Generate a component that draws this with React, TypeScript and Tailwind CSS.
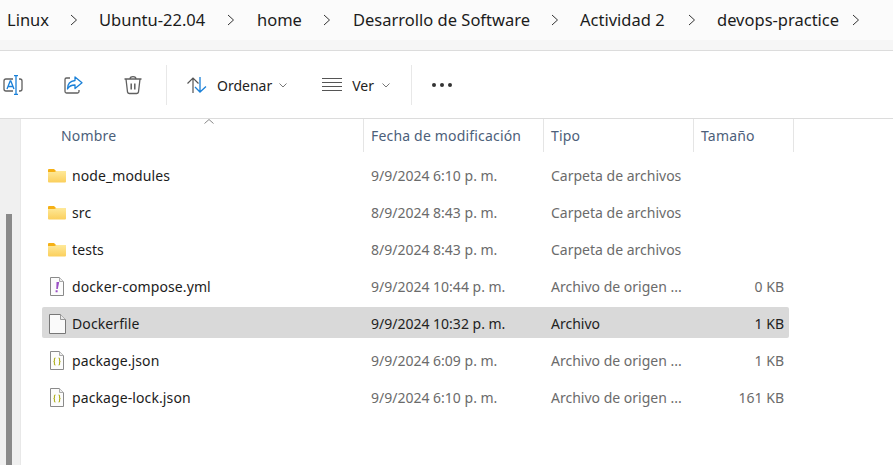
const font = { fontFamily: '"Noto Sans", "Open Sans", sans-serif' };

function Sep() {
  return (
    <svg width="8" height="12" viewBox="0 0 8 12" className="shrink-0 text-[#333]">
      <path d="M1 1l5.500 5L1 11" fill="none" stroke="currentColor" strokeWidth="1" />
    </svg>
  );
}

function Crumbs() {
  const items = [
    ["Linux", "w-[41px]", "w-[51px]"],
    ["Ubuntu-22.04", "w-[106px]", "w-[52px]"],
    ["home", "w-[44px]", "w-[52px]"],
    ["Desarrollo de Software", "w-[176px]", "w-[51px]"],
    ["Actividad 2", "w-[86px]", "w-[51px]"],
    ["devops-practice", "w-[124px]", "w-[30px]"],
  ];
  return (
    <div className="h-10 bg-[#fbfbfb] flex items-center pl-[7px]">
      {items.map(([t, w, g]) => (
        <div key={t} className="flex items-center">
          <span className={`${w} text-[16.5px] tracking-[0px] text-[#1c1c1c] whitespace-nowrap`}>{t}</span>
          <div className={`${g} flex justify-center`}><Sep /></div>
        </div>
      ))}
    </div>
  );
}

function Rename() {
  return (
    <svg width="22" height="22" viewBox="0 0 22 22" fill="none">
      <path d="M12 5H5a2 2 0 0 0-2 2v8a2 2 0 0 0 2 2h7M18 5h1a2 2 0 0 1 2 2v8a2 2 0 0 1-2 2h-1" stroke="#606060" strokeWidth="1.3" />
      <path d="M6 15l3.200-8h.6L13 15M7.200 12.500h4.600" stroke="#1a80d8" strokeWidth="1.3" />
      <path d="M15 2v18M13 1.600h4M13 20.400h4" stroke="#1a80d8" strokeWidth="1.3" />
    </svg>
  );
}

function Share() {
  return (
    <svg width="20" height="20" viewBox="0 0 20 20" fill="none">
      <path d="M7 3H3.500A1.500 1.500 0 0 0 2 4.500v12A1.500 1.500 0 0 0 3.500 18h11a1.500 1.500 0 0 0 1.500-1.500V15" stroke="#606060" strokeWidth="1.3" />
      <path d="M12 2l7 5.800-7 5.700V10c-3.500 0-6 1-7.500 4 0-5 2.500-8 7.500-8.500V2z" stroke="#1a80d8" strokeWidth="1.3" strokeLinejoin="round" />
    </svg>
  );
}

function Trash() {
  return (
    <svg width="20" height="20" viewBox="0 0 20 20" fill="none" stroke="#606060" strokeWidth="1.3">
      <path d="M1.500 4h17M7 4c0-3.300 6-3.300 6 0" />
      <path d="M3 4l1.500 13a2 2 0 0 0 2 1.500h7a2 2 0 0 0 2-1.500L17 4" />
      <path d="M8.200 8.500v6M11.800 8.500v6" strokeWidth="1.5" />
    </svg>
  );
}

function SortIcon() {
  return (
    <svg width="22" height="18" viewBox="0 0 22 18" fill="none">
      <path d="M7 17V2M1.500 7.500L7 2l5.500 5.500" stroke="#555" strokeWidth="1.2" />
      <path d="M14 1v15M9 11l5 5 6-5.500" stroke="#1a80d8" strokeWidth="1.3" />
    </svg>
  );
}

function ViewIcon() {
  return (
    <svg width="20" height="14" viewBox="0 0 20 14" stroke="#555" strokeWidth="1">
      <path d="M0 .5h20M0 4.500h20M0 8.500h20M0 12.500h20" />
    </svg>
  );
}

function Chevron() {
  return (
    <svg width="8" height="5" viewBox="0 0 8 5" className="text-[#777]">
      <path d="M.5.500L4 4 7.500.500" fill="none" stroke="currentColor" strokeWidth="1" />
    </svg>
  );
}

function Toolbar() {
  return (
    <div className="h-[68px] bg-white border-t border-[#dcdcdc] flex items-center">
      <div className="w-[166px] h-full flex items-center pl-px">
        <Rename />
        <div className="ml-[40px]"><Share /></div>
        <div className="ml-[40px]"><Trash /></div>
      </div>
      <div className="w-px h-10 bg-[#e8e8e8]" />
      <div className="w-[244px] flex items-center pl-[19px] text-[14px] text-[#222] pt-px">
        <SortIcon />
        <span className="ml-[9px] mr-[7px]">Ordenar</span>
        <Chevron />
        <div className="ml-[35px]"><ViewIcon /></div>
        <span className="ml-2.5 mr-2">Ver</span>
        <Chevron />
      </div>
      <div className="w-px h-10 bg-[#e8e8e8]" />
      <div className="ml-5 flex gap-[4px]">
        <span className="size-[4px] rounded-full bg-[#333]" />
        <span className="size-[4px] rounded-full bg-[#333]" />
        <span className="size-[4px] rounded-full bg-[#333]" />
      </div>
    </div>
  );
}

function Folder() {
  return (
    <svg width="18" height="16" viewBox="0 0 18 16">
      <defs>
        <linearGradient id="fg" x1="0" y1="0" x2="0" y2="1">
          <stop offset="0" stopColor="#fee99a" />
          <stop offset="1" stopColor="#fbcf5c" />
        </linearGradient>
      </defs>
      <path d="M0 2a1 1 0 0 1 1-1h5l2 2h9a1 1 0 0 1 1 1v2H0z" fill="#f5b015" />
      <path d="M0 4h6.500l2-1H18v10.500a1 1 0 0 1-1 1H1a1 1 0 0 1-1-1z" fill="url(#fg)" />
    </svg>
  );
}

function Doc({ kind }: { kind: "warn" | "plain" | "json" }) {
  if (kind === "plain") {
    return (
      <svg width="17" height="20" viewBox="0 0 17 20">
        <path d="M.5.500h11l5 5v14H.5z" fill="#fafafa" stroke="#777" />
        <path d="M11.500.500v5h5" fill="#e8e8e8" stroke="#999" />
      </svg>
    );
  }
  return (
    <svg width="14" height="19" viewBox="0 0 14 19">
      <path d="M.5.500h9l4 4v14H.5z" fill="#fcfcfc" stroke="#8a8a8a" />
      <path d="M9.500.500v4h4" fill="#eee" stroke="#aaa" />
      {kind === "warn" ? (
        <path d="M6.500 5h2.700L7.800 12H6.300zM5.600 13.200h2V15.200h-2z" fill="#9a4fc4" />
      ) : (
        <path d="M5.500 7C4 7 4.500 8.500 4.500 9.500S3.500 10.500 3.500 10.500s1 .2 1 1S4 14 5.500 14M8.500 7c1.500 0 1 1.500 1 2.500s1 1 1 1-1 .2-1 1 .5 2.500-1 2.500" fill="none" stroke="#b0b020" strokeWidth="1.1" />
      )}
    </svg>
  );
}

const rows: { name: string; date: string; type: string; size: string; icon: "folder" | "warn" | "plain" | "json"; sel?: boolean }[] = [
  { name: "node_modules", date: "9/9/2024 6:10 p. m.", type: "Carpeta de archivos", size: "", icon: "folder" },
  { name: "src", date: "8/9/2024 8:43 p. m.", type: "Carpeta de archivos", size: "", icon: "folder" },
  { name: "tests", date: "8/9/2024 8:43 p. m.", type: "Carpeta de archivos", size: "", icon: "folder" },
  { name: "docker-compose.yml", date: "9/9/2024 10:44 p. m.", type: "Archivo de origen ...", size: "0 KB", icon: "warn" },
  { name: "Dockerfile", date: "9/9/2024 10:32 p. m.", type: "Archivo", size: "1 KB", icon: "plain", sel: true },
  { name: "package.json", date: "9/9/2024 6:09 p. m.", type: "Archivo de origen ...", size: "1 KB", icon: "json" },
  { name: "package-lock.json", date: "9/9/2024 6:10 p. m.", type: "Archivo de origen ...", size: "161 KB", icon: "json" },
];

function Row({ r }: { r: (typeof rows)[number] }) {
  const muted = r.sel ? "text-[#222]" : "text-[#6b6b6b]";
  return (
    <div className={`ml-[21px] w-[747px] h-[31px] pt-[2px] rounded-[2px] flex items-center text-[14px] ${r.sel ? "bg-[#d9d9d9]" : ""}`}>
      <div className="w-[30px] flex justify-center shrink-0">
        {r.icon === "folder" ? <Folder /> : <Doc kind={r.icon} />}
      </div>
      <div className="w-[299px] text-[#1c1c1c] tracking-[0.1px] whitespace-nowrap">{r.name}</div>
      <div className={`w-[180px] whitespace-nowrap ${muted}`}>{r.date}</div>
      <div className={`w-[150px] whitespace-nowrap ${muted}`}>{r.type}</div>
      <div className={`w-[83px] text-right whitespace-nowrap ${muted}`}>{r.size}</div>
    </div>
  );
}

function HeaderCell({ label, w }: { label: string; w: string }) {
  return (
    <div className={`${w} h-[33px] border-r border-[#e5e5e5] flex items-center pl-[7px] text-[14px] tracking-[0.18px] text-[#4c607a] whitespace-nowrap shrink-0`}>
      {label}
    </div>
  );
}

export default function App() {
  return (
    <div className="w-[893px] h-[466px] bg-white overflow-hidden" style={font}>
      <Crumbs />
      <div className="h-2.5 bg-[#f6f6f6]" />
      <Toolbar />
      <div className="flex border-t border-[#dcdcdc] h-[347px]">
        <div className="w-[21px] bg-[#f0f0f0] border-r border-[#e8e8e8] flex flex-col pl-1.5 shrink-0">
          <div className="mt-[95px] w-1.5 flex-1 bg-[#8a8a8a]" />
        </div>
        <div className="flex-1 min-w-0">
          <div className="relative flex pl-[33px]">
            <svg width="10" height="5" viewBox="0 0 10 5" className="absolute left-[183px] top-0 text-[#888]">
              <path d="M.5 4.500L5 .500l4.500 4" fill="none" stroke="currentColor" />
            </svg>
            <HeaderCell label="Nombre" w="w-[310px]" />
            <HeaderCell label="Fecha de modificación" w="w-[180px]" />
            <HeaderCell label="Tipo" w="w-[150px]" />
            <HeaderCell label="Tamaño" w="w-[100px]" />
          </div>
          <div className="flex flex-col gap-1.5 pt-[7px]">
            {rows.map((r) => (
              <Row key={r.name} r={r} />
            ))}
          </div>
        </div>
      </div>
    </div>
  );
}
